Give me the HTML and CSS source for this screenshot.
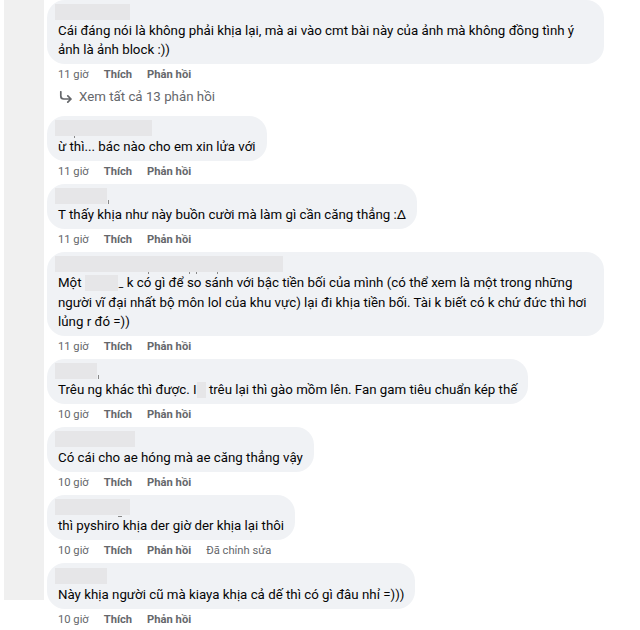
FILE: index.html
```html
<!doctype html>
<html lang=vi >
<head>
<meta charset=utf-8 >
<title>Bình luận</title>
<link rel="stylesheet" href="styles.css">
</head>
<body>

	<div id=page >

		<div id=rail ></div>

		<div id=thread >

			<div class=comment >
				<div class="bubble wide first" >
					<div class=name ><span class=blur style=width:75px; ></span></div>
					<div class=text >Cái đáng nói là không phải khịa lại, mà ai vào cmt bài này của ảnh mà không đồng tình ý<br>ảnh là ảnh block :))</div>
				</div>
				<div class=meta ><span>11 giờ</span><b>Thích</b><b>Phản hồi</b></div>
			</div>

			<div class=replies >
				<svg width=14 height=12 viewBox="0 0 14 12" ><path d="M1.8 0.8 V5 Q1.8 8 4.8 8 H12 M8.8 4.8 L12 8 L8.8 11.2" fill=none stroke=#65676b stroke-width=1.7 stroke-linecap=round stroke-linejoin=round /></svg>
				<span>Xem tất cả 13 phản hồi</span>
			</div>

			<div class=comment >
				<div class=bubble >
					<div class=name ><span class=blur style=width:97px; ></span><i class=dot style=left:19px; ></i></div>
					<div class=text >ừ thì... bác nào cho em xin lửa với</div>
				</div>
				<div class=meta ><span>11 giờ</span><b>Thích</b><b>Phản hồi</b></div>
			</div>

			<div class=comment >
				<div class=bubble >
					<div class=name ><span class=blur style=width:52px; ></span><i class=tick style=left:53px; ></i></div>
					<div class=text >T thấy khịa như này buồn cười mà làm gì cần căng thẳng :Δ</div>
				</div>
				<div class=meta ><span>11 giờ</span><b>Thích</b><b>Phản hồi</b></div>
			</div>

			<div class=comment >
				<div class="bubble wide" >
					<div class=name ><span class=blur style=width:228px; ></span><i class=dot style=left:93px; ></i><i class=dot style=left:134px; ></i><i class=dot style=left:141px; ></i><i class=dot style=left:162px; ></i></div>
					<div class=text >Một <span class=hide style=width:33px; ></span><span class=under >_</span> k có gì để so sánh với bậc tiền bối của mình (có thể xem là một trong những<br>người vĩ đại nhất bộ môn lol của khu vực) lại đi khịa tiền bối. Tài k biết có k chứ đức thì hơi<br>lủng r đó =))</div>
				</div>
				<div class=meta ><span>11 giờ</span><b>Thích</b><b>Phản hồi</b></div>
			</div>

			<div class=comment >
				<div class=bubble >
					<div class=name ><span class=blur style=width:42px; ></span><i class=tick style=left:43px; ></i></div>
					<div class=text >Trêu ng khác thì được. I<span class=hide style=width:9px; ></span> trêu lại thì gào mồm lên. Fan gam tiêu chuẩn kép thế</div>
				</div>
				<div class=meta ><span>10 giờ</span><b>Thích</b><b>Phản hồi</b></div>
			</div>

			<div class=comment >
				<div class=bubble >
					<div class=name ><span class=blur style=width:80px; ></span></div>
					<div class=text >Có cái cho ae hóng mà ae căng thẳng vậy</div>
				</div>
				<div class=meta ><span>10 giờ</span><b>Thích</b><b>Phản hồi</b></div>
			</div>

			<div class=comment >
				<div class=bubble >
					<div class=name ><span class=blur style=width:75px; ></span><i class=dash style=left:63px; ></i></div>
					<div class=text >thì pyshiro khịa der giờ der khịa lại thôi</div>
				</div>
				<div class=meta ><span>10 giờ</span><b>Thích</b><b>Phản hồi</b><span>Đã chỉnh sửa</span></div>
			</div>

			<div class=comment >
				<div class="bubble tall" >
					<div class=name ><span class=blur style=width:52px; ></span></div>
					<div class=text >Này khịa người cũ mà kiaya khịa cả dế thì có gì đâu nhỉ =)))</div>
				</div>
				<div class=meta ><span>10 giờ</span><b>Thích</b><b>Phản hồi</b></div>
			</div>

		</div>

	</div>

</body>
</html>
```
FILE: styles.css
```css
html, body { background-color: #fff; height: 100%; margin: 0; overflow: hidden; }
body { color: #050505; font: 13.3px/19px Roboto, "Noto Sans", sans-serif; }

#page { display: flex; align-items: flex-start; }

#rail { background-color: #f0f0f0; flex: none; height: 600px; margin-left: 4px; width: 40px; }

#thread { display: flex; flex-direction: column; margin-left: 3px; }

.comment { display: flex; flex-direction: column; align-items: flex-start; }

.bubble { background-color: #f0f2f5; border-radius: 18px; padding: 4px 11px 5px; }
.bubble.wide { box-sizing: border-box; width: 557px; }
.bubble.tall { padding-top: 5px; padding-bottom: 5px; }

.name { height: 17px; position: relative; margin-left: -3px; }
.name .blur { background-color: #e6e6e8; display: block; height: 16px; }
.name i { background-color: #888; position: absolute; }
.name .dot { height: 2px; top: 16px; width: 1px; }
.name .tick { height: 4px; top: 12px; width: 1px; }
.name .dash { height: 1px; top: 17px; width: 4px; }

.text { white-space: nowrap; }
.hide { background-color: #e6e6e8; display: inline-block; height: 16px; vertical-align: -4px; }
.under { display: inline-block; font-size: 10px; margin-left: 1px; }

.meta { color: #65676b; display: flex; gap: 15px; font: 11.2px/17px Roboto, sans-serif; margin: 2px 0 4px 11px; }
.meta b { font-weight: 700; }

.replies { align-items: center; color: #65676b; display: flex; gap: 6px; height: 19px; margin: 0 0 10px 12px; }
```
